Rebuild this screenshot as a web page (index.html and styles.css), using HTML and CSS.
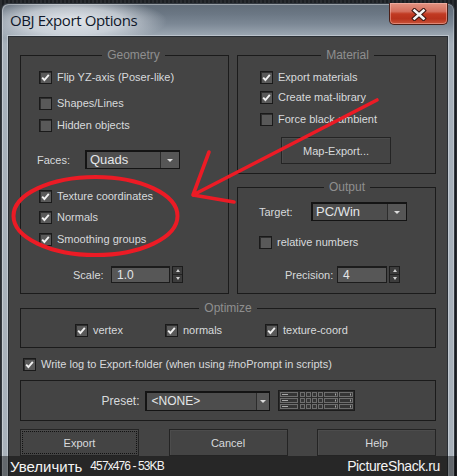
FILE: index.html
```html
<!DOCTYPE html>
<html>
<head>
<meta charset="utf-8">
<title>OBJ Export Options</title>
<link rel="stylesheet" href="styles.css">
</head>
<body>
<div class="screen">
  <div class="window">
    <div class="titlebar">
      <span class="title">OBJ Export Options</span>
      <button class="close" aria-label="Close">
        <svg width="16" height="13" viewBox="0 0 16 13">
          <path d="M3.5 2.5 L12.5 10.5 M12.5 2.5 L3.5 10.5" stroke="#3b1712" stroke-width="4.6" stroke-linecap="square" fill="none"/>
          <path d="M3.5 2.5 L12.5 10.5 M12.5 2.5 L3.5 10.5" stroke="#f4f4f4" stroke-width="2.6" stroke-linecap="square" fill="none"/>
        </svg>
      </button>
    </div>
    <div class="client">
      <div class="top-grid">
        <fieldset class="group geometry">
          <legend>Geometry</legend>
          <div class="check r-flip"><span class="cb on"><svg viewBox="0 0 11 11"><path d="M2.2 5.6 L4.4 8 L8.8 2.8"/></svg></span>Flip YZ-axis (Poser-like)</div>
          <div class="check r-shapes"><span class="cb"></span>Shapes/Lines</div>
          <div class="check r-hidden"><span class="cb"></span>Hidden objects</div>
          <div class="field-row r-faces">
            <span class="lbl w-faces">Faces:</span>
            <div class="select s-faces"><span class="val">Quads</span><span class="arrow"><i></i></span></div>
          </div>
          <div class="check r-tex"><span class="cb on"><svg viewBox="0 0 11 11"><path d="M2.2 5.6 L4.4 8 L8.8 2.8"/></svg></span>Texture coordinates</div>
          <div class="check r-norm"><span class="cb on"><svg viewBox="0 0 11 11"><path d="M2.2 5.6 L4.4 8 L8.8 2.8"/></svg></span>Normals</div>
          <div class="check r-smooth"><span class="cb on"><svg viewBox="0 0 11 11"><path d="M2.2 5.6 L4.4 8 L8.8 2.8"/></svg></span>Smoothing groups</div>
          <div class="field-row r-scale">
            <span class="lbl w-scale">Scale:</span>
            <span class="num f-scale">1.0</span>
            <span class="spinner"><b class="up"></b><b class="down"></b></span>
          </div>
        </fieldset>
        <div class="right-col">
          <fieldset class="group material">
            <legend>Material</legend>
            <div class="check r-expmat"><span class="cb on"><svg viewBox="0 0 11 11"><path d="M2.2 5.6 L4.4 8 L8.8 2.8"/></svg></span>Export materials</div>
            <div class="check r-matlib"><span class="cb on"><svg viewBox="0 0 11 11"><path d="M2.2 5.6 L4.4 8 L8.8 2.8"/></svg></span>Create mat-library</div>
            <div class="check r-force"><span class="cb"></span>Force black ambient</div>
            <button class="btn b-map">Map-Export...</button>
          </fieldset>
          <fieldset class="group output">
            <legend>Output</legend>
            <div class="field-row r-target">
              <span class="lbl w-target">Target:</span>
              <div class="select s-target"><span class="val">PC/Win</span><span class="arrow"><i></i></span></div>
            </div>
            <div class="check r-rel"><span class="cb"></span>relative numbers</div>
            <div class="field-row r-prec">
              <span class="lbl w-prec">Precision:</span>
              <span class="num f-prec">4</span>
              <span class="spinner"><b class="up"></b><b class="down"></b></span>
            </div>
          </fieldset>
        </div>
      </div>
      <fieldset class="group optimize">
        <legend>Optimize</legend>
        <div class="opt-row">
          <div class="check o-vertex"><span class="cb on"><svg viewBox="0 0 11 11"><path d="M2.2 5.6 L4.4 8 L8.8 2.8"/></svg></span>vertex</div>
          <div class="check o-normals"><span class="cb on"><svg viewBox="0 0 11 11"><path d="M2.2 5.6 L4.4 8 L8.8 2.8"/></svg></span>normals</div>
          <div class="check o-tex"><span class="cb on"><svg viewBox="0 0 11 11"><path d="M2.2 5.6 L4.4 8 L8.8 2.8"/></svg></span>texture-coord</div>
        </div>
      </fieldset>
      <div class="check r-log"><span class="cb on"><svg viewBox="0 0 11 11"><path d="M2.2 5.6 L4.4 8 L8.8 2.8"/></svg></span>Write log to Export-folder (when using #noPrompt in scripts)</div>
      <div class="preset-box">
        <span class="lbl preset-lbl">Preset:</span>
        <div class="select s-preset"><span class="val">&lt;NONE&gt;</span><span class="arrow"><i></i></span></div>
        <svg class="preset-icon" width="77" height="21" viewBox="0 0 77 21">
          <rect x="0.5" y="0.5" width="76" height="20" fill="#2c2c2c" stroke="#1c1c1c"/>
          <g fill="#353535" stroke="#6e6e6e">
            <rect x="2.5" y="2.5" width="17" height="4"/>
            <rect x="22.5" y="2.5" width="4" height="4"/>
            <rect x="28.5" y="2.5" width="4" height="4"/>
            <rect x="34.5" y="2.5" width="4" height="4"/>
            <rect x="40.5" y="2.5" width="4" height="4"/>
            <rect x="46.5" y="2.5" width="13" height="4"/>
            <rect x="61.5" y="2.5" width="13" height="4"/>
            <rect x="2.5" y="8.5" width="17" height="4"/>
            <rect x="22.5" y="8.5" width="4" height="4"/>
            <rect x="28.5" y="8.5" width="4" height="4"/>
            <rect x="34.5" y="8.5" width="4" height="4"/>
            <rect x="40.5" y="8.5" width="4" height="4"/>
            <rect x="46.5" y="8.5" width="13" height="4"/>
            <rect x="61.5" y="8.5" width="13" height="4"/>
            <rect x="2.5" y="14.5" width="17" height="4"/>
            <rect x="22.5" y="14.5" width="4" height="4"/>
            <rect x="28.5" y="14.5" width="4" height="4"/>
            <rect x="34.5" y="14.5" width="4" height="4"/>
            <rect x="40.5" y="14.5" width="4" height="4"/>
            <rect x="46.5" y="14.5" width="13" height="4"/>
            <rect x="61.5" y="14.5" width="13" height="4"/>
          </g>
          <g stroke="#a8a8a8" stroke-width="1">
            <path d="M4 4.5 H10 M4 10.5 H10 M4 16.5 H10"/>
            <path d="M57.5 3.5 V5.5 M72.5 3.5 V5.5 M57.5 9.5 V11.5 M72.5 9.5 V11.5 M57.5 15.5 V17.5 M72.5 15.5 V17.5"/>
          </g>
        </svg>
      </div>
      <div class="buttons">
        <button class="btn b-main focused"><span>Export</span></button>
        <button class="btn b-main"><span>Cancel</span></button>
        <button class="btn b-main"><span>Help</span></button>
      </div>
    </div>
  </div>
  <svg class="annot" width="457" height="476" viewBox="0 0 457 476">
    <ellipse cx="95.5" cy="216" rx="82" ry="39" fill="none" stroke="#ec1b25" stroke-width="4"/>
    <path d="M377 100 L193 195 M209 152 L193 195 L234 202" fill="none" stroke="#ec1b25" stroke-width="3.6" stroke-linecap="round" stroke-linejoin="round"/>
  </svg>
  <div class="watermark">
    <span class="wm-left">Увеличить</span>
    <span class="wm-size">457x476 - 53KB</span>
    <span class="wm-right">PictureShack.ru</span>
  </div>
</div>
</body>
</html>
```
FILE: styles.css
```css
html, body {
  margin: 0;
  padding: 0;
  width: 457px;
  height: 476px;
  overflow: hidden;
  background: #1d2024;
  font-family: "Liberation Sans", Arial, sans-serif;
}

.screen {
  position: relative;
  width: 457px;
  height: 476px;
  overflow: hidden;
  background: repeating-linear-gradient(90deg, #2a2d31 0 2px, #1b1e22 2px 4px);
}

.window {
  margin: 3px 0 0 1px;
  width: 454px;
  height: 480px;
  box-sizing: border-box;
  border: 1px solid #343a41;
  border-bottom: none;
  border-radius: 7px 7px 0 0;
  display: flex;
  flex-direction: column;
  background:
    radial-gradient(ellipse 95px 24px at 70px 17px, rgba(232, 236, 241, 0.95) 0%, rgba(225, 230, 236, 0.7) 55%, rgba(225, 230, 236, 0) 100%),
    linear-gradient(180deg, #616c78 0px, #6b7784 10px, #7c8895 20px, #98a3ae 30px, #a6b0ba 40px, #a9b2bb 100%);
  box-shadow: inset 1px 1px 0 rgba(255, 255, 255, 0.35), inset -1px 0 0 rgba(255, 255, 255, 0.25);
}

.titlebar {
  height: 32px;
  display: flex;
  align-items: flex-start;
  justify-content: space-between;
  flex: none;
}

.title {
  margin: 6px 0 0 8px;
  font-family: "Open Sans", "Noto Sans", sans-serif;
  font-size: 15px;
  line-height: 20px;
  letter-spacing: -0.4px;
  color: #10182a;
}

.close {
  margin: -1px 6px 0 0;
  width: 59px;
  height: 22px;
  padding: 0;
  border: 1px solid #4b1f17;
  border-top: none;
  border-radius: 0 0 5px 5px;
  display: flex;
  align-items: center;
  justify-content: center;
  background: linear-gradient(180deg, #e29483 0%, #d46e5c 40%, #c13a22 52%, #b8321c 75%, #c9543a 100%);
  box-shadow: inset 0 0 0 1px rgba(255, 200, 190, 0.45);
}

.close svg {
  display: block;
  margin-top: 1px;
}

.client {
  margin: 0 6px 0 6px;
  flex: 1;
  box-sizing: border-box;
  border: 1px solid #2a2f35;
  border-bottom: none;
  background: #444444;
  padding: 11px 11px 0 11px;
  box-shadow: 0 0 0 1px rgba(220, 226, 232, 0.5);
}

.top-grid {
  display: grid;
  grid-template-columns: 209px 199px;
  column-gap: 8px;
}

.right-col {
  display: flex;
  flex-direction: column;
  gap: 6px;
}

.group {
  margin: 0;
  padding: 0;
  min-width: 0;
  box-sizing: border-box;
  border: 1px solid #1b1b1b;
}

.group legend {
  margin: 0 auto;
  padding: 0 5px;
  font-size: 12px;
  line-height: 14px;
  color: #8f8f8f;
}

.geometry { height: 246px; padding-left: 18px; }
.material { height: 126px; padding-left: 22px; }
.output { height: 114px; padding-left: 21px; }
.optimize { height: 47px; margin-top: 7px; }

.check {
  display: flex;
  align-items: center;
  gap: 5px;
  height: 16px;
  font-size: 11px;
  color: #d8dadc;
  white-space: nowrap;
}

.cb {
  width: 13px;
  height: 13px;
  flex: none;
  box-sizing: border-box;
  border: 1px solid #1a1a1a;
  background: #595959;
  box-shadow: inset 1px 1px 0 #2f2f2f;
  display: flex;
  align-items: center;
  justify-content: center;
}

.cb svg {
  width: 11px;
  height: 11px;
  display: block;
}

.cb svg path {
  fill: none;
  stroke: #f2f2f2;
  stroke-width: 1.9;
}

.lbl {
  font-size: 11px;
  color: #d8dadc;
  white-space: nowrap;
  flex: none;
}

.field-row {
  display: flex;
  align-items: center;
}

/* Geometry rows */
.r-flip { margin-top: 7px; }
.r-shapes { margin-top: 10px; }
.r-hidden { margin-top: 6px; }
.r-faces { margin-top: 17px; height: 19px; margin-left: -2px; }
.w-faces { width: 48px; }
.r-tex { margin-top: 19px; }
.r-norm { margin-top: 5px; }
.r-smooth { margin-top: 6px; }
.r-scale { margin-top: 19px; height: 17px; margin-left: 34px; }
.w-scale { width: 38px; }

/* Material rows */
.r-expmat { margin-top: 7px; }
.r-matlib { margin-top: 4px; }
.r-force { margin-top: 6px; }

/* Output rows */
.r-target { margin-top: 8px; height: 19px; }
.w-target { width: 52px; }
.r-rel { margin-top: 13px; }
.r-prec { margin-top: 16px; height: 17px; margin-left: 26px; }
.w-prec { width: 52px; }

.select {
  display: flex;
  box-sizing: border-box;
  height: 19px;
  border: 1px solid #141414;
  border-top-width: 2px;
  border-left-width: 2px;
  background: #4d4d4d;
  flex: none;
}

.select .val {
  flex: 1;
  padding-left: 3px;
  font-size: 13px;
  line-height: 16px;
  color: #e4e6e8;
  white-space: nowrap;
}

.select .arrow {
  width: 19px;
  box-sizing: border-box;
  border-left: 1px solid #2c2c2c;
  background: #565656;
  display: flex;
  align-items: center;
  justify-content: center;
}

.select .arrow i {
  width: 0;
  height: 0;
  border-left: 3px solid transparent;
  border-right: 3px solid transparent;
  border-top: 3px solid #dcdcdc;
}

.s-faces { width: 95px; }
.s-target { width: 96px; }
.s-preset { width: 125px; height: 20px; }
.s-preset .val { font-size: 12px; line-height: 17px; padding-left: 5px; }
.s-preset .arrow { width: 13px; }

.num {
  box-sizing: border-box;
  height: 17px;
  border: 1px solid #1c1c1c;
  border-top-width: 2px;
  background: #575757;
  color: #e4e6e8;
  font-size: 12px;
  line-height: 14px;
  padding-left: 5px;
  flex: none;
}

.f-scale { width: 59px; }
.f-prec { width: 50px; }

.spinner {
  margin-left: 2px;
  width: 11px;
  height: 17px;
  display: flex;
  flex-direction: column;
  box-sizing: border-box;
  border: 1px solid #1c1c1c;
  background: #3c3c3c;
  flex: none;
}

.spinner b {
  flex: 1;
  display: flex;
  align-items: center;
  justify-content: center;
}

.spinner .up { border-bottom: 1px solid #222; }

.spinner .up::before {
  content: "";
  border-left: 2.5px solid transparent;
  border-right: 2.5px solid transparent;
  border-bottom: 3px solid #d0d0d0;
}

.spinner .down::before {
  content: "";
  border-left: 2.5px solid transparent;
  border-right: 2.5px solid transparent;
  border-top: 3px solid #d0d0d0;
}

.btn {
  box-sizing: border-box;
  height: 27px;
  padding: 0;
  border: 1px solid #242424;
  background: #444444;
  box-shadow: inset 1px 1px 0 #4c4c4c;
  font-family: "Liberation Sans", Arial, sans-serif;
  font-size: 11px;
  color: #d8dadc;
  display: flex;
  align-items: center;
  justify-content: center;
}

.b-map {
  margin: 10px 0 0 21px;
  width: 110px;
}

/* Optimize */
.opt-row {
  display: flex;
  margin-top: 7px;
  padding-left: 54px;
}

.o-vertex { width: 90px; }
.o-normals { width: 100px; }

.r-log {
  margin: 8px 0 0 3px;
}

.preset-box {
  margin-top: 8px;
  height: 41px;
  box-sizing: border-box;
  border: 1px solid #1b1b1b;
  display: flex;
  align-items: center;
  justify-content: center;
}

.preset-lbl {
  font-size: 12px;
  margin-right: 5px;
}

.preset-icon {
  margin-left: 8px;
  display: block;
}

.buttons {
  margin-top: 8px;
  display: flex;
  justify-content: space-between;
}

.b-main { width: 119px; }

.b-main.focused span {
  display: flex;
  align-items: center;
  justify-content: center;
  width: 113px;
  height: 21px;
  box-sizing: border-box;
  outline: 1px dotted #111;
}

.annot {
  position: absolute;
  left: 0;
  top: 0;
  pointer-events: none;
}

.watermark {
  position: absolute;
  left: 0;
  bottom: 0;
  width: 457px;
  height: 20px;
  background: rgba(0, 0, 0, 0.42);
  display: flex;
  align-items: center;
  color: #f4f4f4;
  white-space: nowrap;
}

.wm-left {
  margin-left: 10px;
  font-size: 15px;
}

.wm-size {
  margin-left: 8px;
  font-size: 12px;
  letter-spacing: -0.9px;
}

.wm-right {
  margin-left: auto;
  margin-right: 17px;
  font-size: 14px;
  letter-spacing: -0.4px;
}
```
